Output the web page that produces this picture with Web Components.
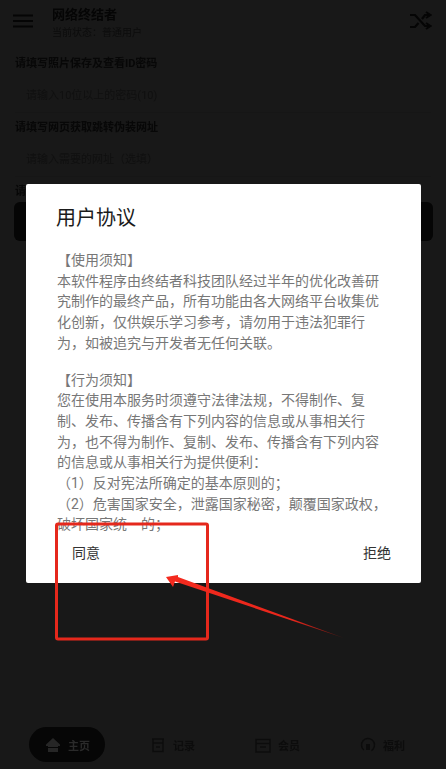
<!DOCTYPE html>
<html lang="zh-CN">
<head>
<meta charset="utf-8">
<title>用户协议</title>
<style>
html, body { margin: 0; padding: 0; background: #181818; }
body { width: 446px; height: 769px; overflow: hidden; font-family: "Roboto", "Noto Sans CJK SC", sans-serif; }
</style>
</head>
<body>
<app-page></app-page>

<script>
const font = '"Roboto", "Noto Sans CJK SC", sans-serif';

// top bar with the menu button and shuffle icon
class AppHeader extends HTMLElement {
    constructor() {
        super();
        this.attachShadow({mode: 'open'}).innerHTML = `
        <style>
            :host { display: flex; align-items: flex-start; height: 57px; font-family: ${font}; color: #050505; }
            .menu { margin: 14px 0 0 13px; width: 20px; height: 14px; flex: none; }
            .titles { margin: 7px 0 0 19px; flex: 1; filter: blur(.5px); }
            .name { font-size: 13px; line-height: 15px; font-weight: 700; }
            .sub { font-size: 10px; line-height: 13px; margin-top: 4px; color: #0c0c0c; }
            .shuffle { margin: 11px 14px 0 0; width: 22px; height: 20px; flex: none; }
        </style>
        <svg class="menu" viewBox="0 0 20 14"><path d="M0 1.5H20M0 7H20M0 12.5H20" stroke="#050505" stroke-width="2"/></svg>
        <div class="titles">
            <div class="name"><slot name="name"></slot></div>
            <div class="sub"><slot name="sub"></slot></div>
        </div>
        <svg class="shuffle" viewBox="0 0 22 20" fill="none" stroke="#050505" stroke-width="2.2">
            <path d="M0 4H5L15 15H20M0 16H5L8.5 12M12 8L15 4H20"/>
            <path d="M16 1L20.5 4L16 7M16 12L20.5 15L16 18" stroke-width="2"/>
        </svg>`;
    }
}

// label + faint input row on the page behind the dialog
class FormField extends HTMLElement {
    constructor() {
        super();
        this.attachShadow({mode: 'open'}).innerHTML = `
        <style>
            :host { display: block; margin: 0 15px; font-family: ${font}; }
            .label { font-size: 11px; line-height: 14px; font-weight: 700; color: #070707; filter: blur(.4px); }
            .input { height: 36px; margin-top: 5px; padding-left: 11px; display: flex; align-items: center; font-size: 11px; color: #101010; border-bottom: 1px solid #161616; filter: blur(.4px); }
        </style>
        <div class="label"><slot name="label"></slot></div>
        <div class="input"><slot></slot></div>`;
    }
}

class NavItem extends HTMLElement {
    constructor() {
        super();
        const icon = this.getAttribute('icon');
        const paths = {
            home: '<path d="M8 1L1 7.5V9H3V15H13V9H15V7.5Z" fill="#262626"/><path d="M3 10.5H13" stroke="#060606" stroke-width="1"/>',
            box: '<path d="M2 2H14M3 2V14.5H13V2M3 6H13M6 10H10" fill="none" stroke="#0c0c0c" stroke-width="1.5"/>',
            card: '<path d="M1 2.5H15V15H1ZM1 6.5H15M5 10H11" fill="none" stroke="#0c0c0c" stroke-width="1.5"/>',
            gift: '<circle cx="8" cy="8" r="6.5" fill="none" stroke="#0c0c0c" stroke-width="1.5" stroke-dasharray="32 9" transform="rotate(130 8 8)"/><path d="M6 7H10V13H6Z" fill="#0c0c0c"/>'
        };
        this.attachShadow({mode: 'open'}).innerHTML = `
        <style>
            :host { display: flex; align-items: center; gap: 7px; height: 35px; padding: 0 15px 0 16px; border-radius: 18px; font-family: ${font}; font-size: 11px; font-weight: 700; color: #0c0c0c; }
            :host([active]) { background: #060606; color: #2a2a2a; }
            svg { width: 16px; height: 16px; flex: none; filter: blur(.4px); }
            span { filter: blur(.4px); }
        </style>
        <svg viewBox="0 0 16 16">${paths[icon]}</svg><span><slot></slot></span>`;
    }
}

class BottomNav extends HTMLElement {
    constructor() {
        super();
        this.attachShadow({mode: 'open'}).innerHTML = `
        <style>
            :host { display: flex; align-items: center; gap: 29px; height: 35px; padding-left: 29px; }
        </style>
        <slot></slot>`;
    }
}

// the white agreement dialog
class AgreementDialog extends HTMLElement {
    constructor() {
        super();
        this.attachShadow({mode: 'open'}).innerHTML = `
        <style>
            :host { position: absolute; left: 26px; top: 184px; width: 395px; height: 399px; box-sizing: border-box; background: #fff; border-radius: 2px; display: flex; flex-direction: column; font-family: ${font}; }
            h2 { margin: 21px 0 0 30px; font-size: 20px; line-height: 26px; font-weight: 400; color: #1b1b1b; }
            .body { margin: 19px 30px 0 31px; height: 285px; overflow: hidden; font-size: 14px; line-height: 20.65px; color: #777; white-space: nowrap; }
            .actions { display: flex; justify-content: space-between; padding: 0 30px 0 46px; margin-top: 8px; font-size: 14px; line-height: 20px; color: #333; }
            ::slotted(.gap) { height: 16.5px; }
        </style>
        <h2><slot name="title"></slot></h2>
        <div class="body"><slot></slot></div>
        <div class="actions"><slot name="actions"></slot></div>`;
    }
}

// red box and arrow drawn over the screenshot
class RedMarkup extends HTMLElement {
    constructor() {
        super();
        this.attachShadow({mode: 'open'}).innerHTML = `
        <style>
            :host { position: absolute; left: 0; top: 0; width: 446px; height: 769px; pointer-events: none; }
            svg { display: block; }
        </style>
        <svg width="446" height="769" viewBox="0 0 446 769">
            <defs>
                <linearGradient id="tail" gradientUnits="userSpaceOnUse" x1="170" y1="578" x2="344" y2="638">
                    <stop offset="0" stop-color="#f42a1e"/>
                    <stop offset=".7" stop-color="#e8261b"/>
                    <stop offset="1" stop-color="#5a1410"/>
                </linearGradient>
            </defs>
            <rect x="56.5" y="524" width="151" height="115" rx="1.5" fill="none" stroke="#e5281c" stroke-width="3"/>
            <path d="M344 638L178 577L178 575L166 577L173 587L175 581.5Z" fill="url(#tail)"/>
        </svg>`;
    }
}

class AppPage extends HTMLElement {
    constructor() {
        super();
        this.attachShadow({mode: 'open'}).innerHTML = `
        <style>
            :host { display: flex; flex-direction: column; position: relative; width: 446px; height: 769px; background: #181818; overflow: hidden; }
            .fields { display: flex; flex-direction: column; gap: 8px; }
            .third { margin: 8px 0 0 15px; font: 700 11px/14px ${font}; color: #070707; filter: blur(.4px); }
            .wide { height: 39px; margin: 3px 13px 0 14px; border-radius: 6px; background: #050505; }
            .spacer { flex: 1; }
            .foot { margin-bottom: 7px; }
        </style>
        <app-header>
            <span slot="name">网络终结者</span>
            <span slot="sub">当前状态：普通用户</span>
        </app-header>
        <div class="fields">
            <form-field><span slot="label">请填写照片保存及查看ID密码</span>请输入10位以上的密码(10)</form-field>
            <form-field><span slot="label">请填写网页获取跳转伪装网址</span>请输入需要的网址（选填）</form-field>
        </div>
        <div class="third">请选择功能</div>
        <div class="wide"></div>
        <div class="spacer"></div>
        <bottom-nav class="foot">
            <nav-item icon="home" active>主页</nav-item>
            <nav-item icon="box">记录</nav-item>
            <nav-item icon="card">会员</nav-item>
            <nav-item icon="gift">福利</nav-item>
        </bottom-nav>
        <agreement-dialog>
            <span slot="title">用户协议</span>
            <div>【使用须知】</div>
            <div>本软件程序由终结者科技团队经过半年的优化改善研</div>
            <div>究制作的最终产品，所有功能由各大网络平台收集优</div>
            <div>化创新，仅供娱乐学习参考，请勿用于违法犯罪行</div>
            <div>为，如被追究与开发者无任何关联。</div>
            <div class="gap"></div>
            <div>【行为须知】</div>
            <div>您在使用本服务时须遵守法律法规，不得制作、复</div>
            <div>制、发布、传播含有下列内容的信息或从事相关行</div>
            <div>为，也不得为制作、复制、发布、传播含有下列内容</div>
            <div>的信息或从事相关行为提供便利：</div>
            <div>（1）反对宪法所确定的基本原则的；</div>
            <div>（2）危害国家安全，泄露国家秘密，颠覆国家政权，</div>
            <div>破坏国家统一的；</div>
            <span slot="actions">同意</span>
            <span slot="actions">拒绝</span>
        </agreement-dialog>
        <red-markup></red-markup>`;
    }
}

customElements.define('app-header', AppHeader);
customElements.define('form-field', FormField);
customElements.define('nav-item', NavItem);
customElements.define('bottom-nav', BottomNav);
customElements.define('agreement-dialog', AgreementDialog);
customElements.define('red-markup', RedMarkup);
customElements.define('app-page', AppPage);
</script>
</body>
</html>
